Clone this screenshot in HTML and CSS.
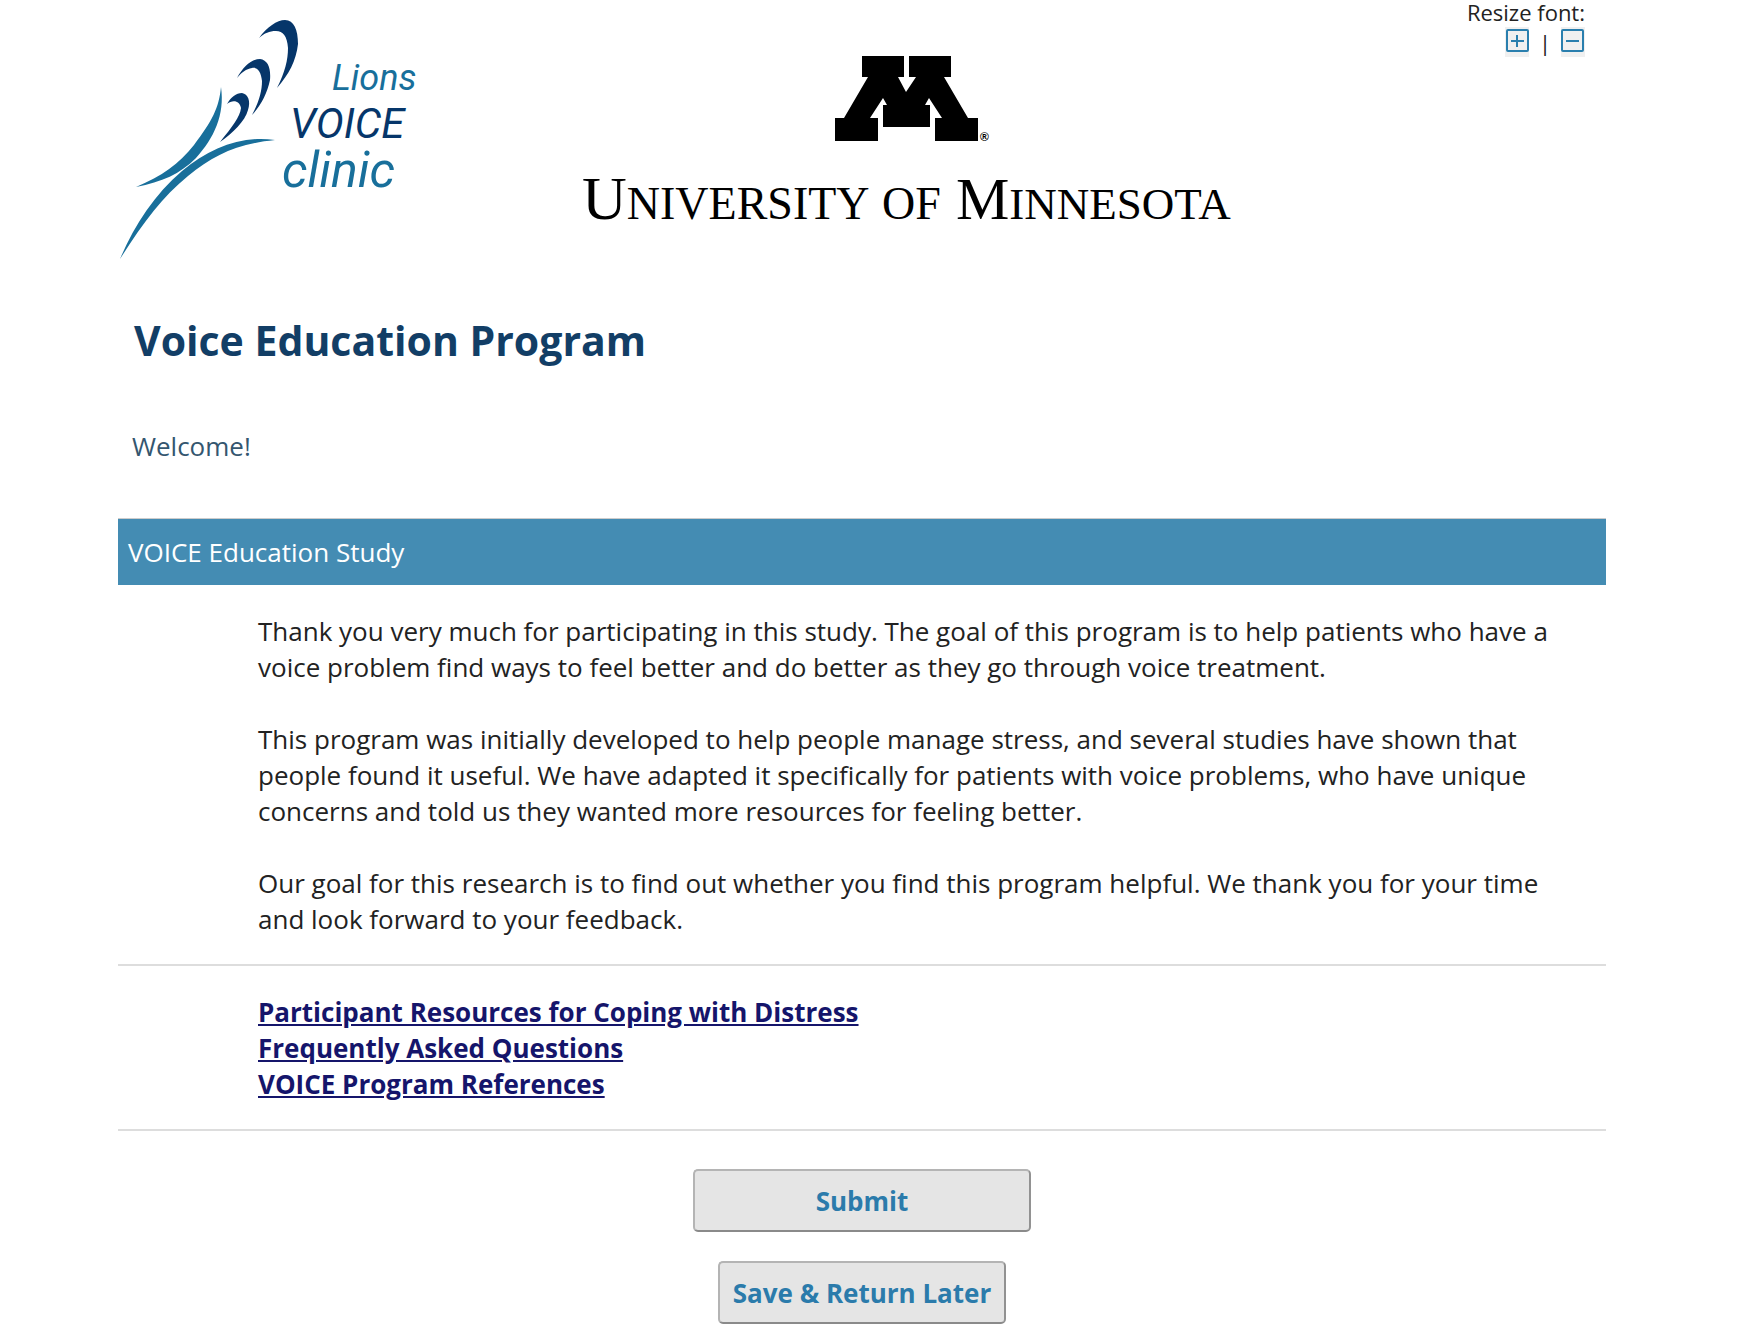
FILE: index.html
```html
<!DOCTYPE html>
<html lang="en">
<head>
<meta charset="utf-8">
<meta name="viewport" content="width=device-width, initial-scale=1">
<title>Voice Education Program</title>
<link rel="stylesheet" href="styles.css">
</head>
<body>
<div class="page">
  <header class="header">
    <svg class="logo-clinic" viewBox="0 0 320 262" role="img" aria-label="Lions Voice Clinic">
      <g class="navy">
        <path d="M141 38C149 27 159 20 167 20C176 20 180 30 180 44C178 61 171 74 159 88C167 72 170 60 170 48C169 36 165 31 158 31C151 31 147 33 141 38Z"/>
        <path d="M119 78C125 67 133 59 142 59C150 60 153 68 152 80C149 94 143 105 134 115C141 102 144 91 144 81C143 72 140 67 134 68C128 69 124 72 119 78Z"/>
        <path d="M109 104C113 97 118 93 124 93C130 94 133 101 130 110C127 121 115 133 102 142C114 127 122 117 123 108C122 101 115 99 109 104Z"/>
        <text class="clinic-name" x="172" y="138" font-size="42">VOICE</text>
      </g>
      <g class="blue">
        <path d="M103 87C107 115 96 138 78 158C62 174 44 182 18 187C44 176 61 164 76 145C94 121 101 108 103 87Z"/>
        <path d="M157 140C118 144 96 155 70 176C44 197 25 223 2 259C16 226 36 195 64 171C92 148 123 135 157 140Z"/>
        <text class="clinic-name" x="214" y="90" font-size="36">Lions</text>
        <text class="clinic-name" x="164" y="187" font-size="50">clinic</text>
      </g>
    </svg>
    <svg class="logo-university" viewBox="0 0 670 190" role="img" aria-label="University of Minnesota">
      <path d="M282 16H324V37H318L326 52L336 37H329V16H371V37H364L388 78H398V101H355V78H362L349 58L345 65H350V87H303V65H307L303 58L290 78H298V101H255V78H264L288 37H282Z"/>
      <text class="registered" x="400" y="101" font-size="12">®</text>
      <g class="university-name">
        <text x="2" y="179"><tspan font-size="62">U</tspan><tspan font-size="46">NIVERSITY</tspan></text>
        <text x="302" y="179" font-size="46">OF</text>
        <text x="376" y="179"><tspan font-size="60">M</tspan><tspan font-size="45">INNESOTA</tspan></text>
      </g>
    </svg>
    <div class="resize">
      <span>Resize font:</span>
      <div class="resize-controls">
        <button class="resize-button" type="button" aria-label="Increase font size">
          <svg viewBox="0 0 24 30" aria-hidden="true"><rect x="2" y="3" width="21" height="21" rx="1"/><path d="M6 14H19M12 8V20"/></svg>
        </button>
        <span>|</span>
        <button class="resize-button" type="button" aria-label="Decrease font size">
          <svg viewBox="0 0 24 30" aria-hidden="true"><rect x="1" y="3" width="21" height="21" rx="1"/><path d="M5 14H18"/></svg>
        </button>
      </div>
    </div>
  </header>
  <main>
    <h1 class="title">Voice Education Program</h1>
    <p class="welcome">Welcome!</p>
    <form class="survey">
      <h2 class="section-title">VOICE Education Study</h2>
      <div class="row">
        <p>Thank you very much for participating in this study. The goal of this program is to help patients who have a voice problem find ways to feel better and do better as they go through voice treatment.</p>
        <p>This program was initially developed to help people manage stress, and several studies have shown that people found it useful. We have adapted it specifically for patients with voice problems, who have unique concerns and told us they wanted more resources for feeling better.</p>
        <p>Our goal for this research is to find out whether you find this program helpful. We thank you for your time and look forward to your feedback.</p>
      </div>
      <nav class="row links">
        <a href="#resources">Participant Resources for Coping with Distress</a>
        <a href="#faq">Frequently Asked Questions</a>
        <a href="#references">VOICE Program References</a>
      </nav>
      <div class="actions">
        <button class="button button-wide" type="submit">Submit</button>
        <button class="button" type="button">Save &amp; Return Later</button>
      </div>
    </form>
  </main>
</div>
</body>
</html>
```
FILE: styles.css
```css
* { box-sizing: border-box; }
body {
  margin: 0;
  background: #fff;
  color: #222;
  font-family: "Open Sans", sans-serif;
  font-size: 26px;
  line-height: 36px;
}
h1, h2, p { margin: 0; }
.page { padding: 0 148px 0 118px; }

.header {
  display: flex;
  align-items: flex-start;
  height: 264px;
}
.logo-clinic { flex: none; width: 320px; height: 262px; }
.logo-university { flex: none; width: 670px; height: 190px; margin: 40px 0 0 142px; }
.navy { fill: #06366a; }
.blue { fill: #186f9b; }
.clinic-name {
  font-family: Roboto, "Liberation Sans", sans-serif;
  font-style: italic;
}
.university-name { font-family: "Liberation Serif", serif; }
.registered { font-family: "Liberation Sans", sans-serif; font-weight: bold; }

.resize {
  display: flex;
  flex-direction: column;
  align-items: flex-end;
  margin-left: auto;
  padding-right: 21px;
  font-size: 22px;
  line-height: 24px;
}
.resize-controls { display: flex; align-items: center; gap: 10px; padding-top: 3px; }
.resize-button {
  width: 24px;
  height: 30px;
  padding: 0;
  border: 0;
  background: #f0f0f0;
}
.resize-button svg { display: block; width: 24px; height: 30px; }
.resize-button rect, .resize-button path { fill: none; stroke: #2a7fae; stroke-width: 2; }

.title {
  padding: 48px 16px 0;
  color: #123e66;
  font-size: 41px;
  line-height: 56px;
}
.welcome { padding: 60px 14px 54px; color: #34566f; }
.section-title {
  padding: 15px 10px;
  border-top: 1px solid #ccc;
  background: #448cb3;
  color: #fff;
  font-size: 26px;
  font-weight: 400;
}
.row {
  display: flex;
  flex-direction: column;
  gap: 36px;
  padding: 28px 40px 27px 140px;
  border-bottom: 2px solid #ddd;
}
.links { align-items: flex-start; gap: 0; }
.links a { color: #15156b; font-weight: 700; }

.actions {
  display: flex;
  flex-direction: column;
  align-items: center;
  gap: 29px;
  padding: 38px 0 16px;
}
.button {
  height: 63px;
  padding: 0 13px;
  border: 2px solid;
  border-color: #b4b4b4 #929292 #8a8a8a #b4b4b4;
  border-radius: 5px;
  background: #e5e5e5;
  color: #2b7bab;
  font: 700 26px/36px "Open Sans", sans-serif;
}
.button-wide { width: 338px; }
```
